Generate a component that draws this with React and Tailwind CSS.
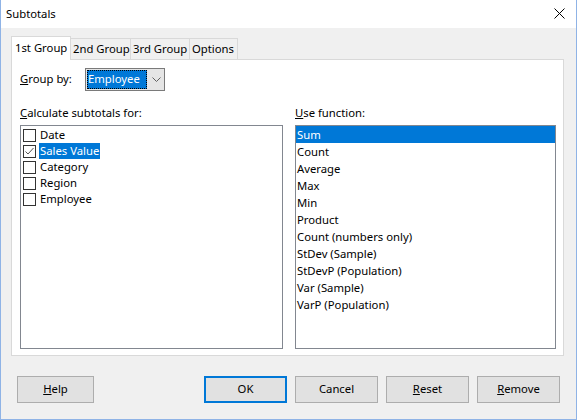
import React from 'react';

const FONT = { fontFamily: '"Noto Sans", "Open Sans", sans-serif' };

const FIELDS = [
  { label: 'Date', checked: false },
  { label: 'Sales Value', checked: true },
  { label: 'Category', checked: false },
  { label: 'Region', checked: false },
  { label: 'Employee', checked: false },
];

const FUNCTIONS = [
  'Sum',
  'Count',
  'Average',
  'Max',
  'Min',
  'Product',
  'Count (numbers only)',
  'StDev (Sample)',
  'StDevP (Population)',
  'Var (Sample)',
  'VarP (Population)',
];

const Button = ({ children, primary, w = 'w-[83px]' }) => (
  <div
    className={`flex h-[27px] ${w} items-center justify-center bg-[#e1e1e1] ${
      primary ? 'border-2 border-[#0078d7]' : 'border border-[#adadad]'
    }`}
  >
    {children}
  </div>
);

export default function App() {
  return (
    <div
      className="flex h-[420px] w-[577px] flex-col whitespace-nowrap border border-t-0 border-[#8fb3e6] bg-[#f0f0f0] text-[11.3px] text-black"
      style={FONT}
    >
      {/* Title bar */}
      <div className="flex h-[28px] items-center justify-between bg-white pl-[5px] pr-[11px]">
        <span>Subtotals</span>
        <svg width="11" height="11" viewBox="0 0 11 11" className="mt-[-2px]">
          <path d="M0.5 0.5 L10.5 10.5 M10.5 0.5 L0.5 10.5" stroke="#000" strokeWidth="1" />
        </svg>
      </div>

      {/* Tabs */}
      <div className="ml-[10px] mt-[8px] flex items-end">
        <div className="relative z-10 -mb-px h-[24px] w-[60px] border border-b-0 border-[#d9d9d9] bg-white pl-[3px] pt-[2px] leading-[18px]">
          1st Group
        </div>
        <div className="h-[21px] w-[60px] border border-b-0 border-l-0 border-[#d9d9d9] pl-[2px] pt-[1px] leading-[18px]">2nd Group</div>
        <div className="h-[21px] w-[59px] border border-b-0 border-l-0 border-[#d9d9d9] pl-[2px] pt-[1px] leading-[18px]">3rd Group</div>
        <div className="h-[21px] w-[48px] border border-b-0 border-l-0 border-[#d9d9d9] pl-[2px] pt-[1px] leading-[18px]">Options</div>
      </div>

      {/* Panel */}
      <div className="ml-[10px] flex h-[297px] w-[553px] flex-col border border-[#d9d9d9] bg-white pl-[8px] pr-[6px] pt-[8px] pb-[6px]">
        <div className="flex items-center">
          <span className="w-[65px]">
            <span className="underline">G</span>roup by:
          </span>
          <div className="flex h-[23px] w-[80px] border border-[#7a7a7a] bg-[#e5e5e5]">
            <div className="m-px flex flex-1 items-center bg-[#0078d7] pl-px text-white outline-1 outline-dotted outline-black -outline-offset-1">
              Employee
            </div>
            <div className="flex w-[16px] items-center justify-center">
              <svg width="9" height="5" viewBox="0 0 9 5">
                <path d="M0.5 0.5 L4.5 4.5 L8.5 0.5" stroke="#606060" fill="none" />
              </svg>
            </div>
          </div>
        </div>

        <div className="mt-[13px] flex flex-1 gap-[12px]">
          <div className="flex w-[263px] flex-col">
            <div className="h-[21px] leading-[17px]">
              <span className="underline">C</span>alculate subtotals for:
            </div>
            <div className="flex-1 border border-[#828790] bg-white pl-px pt-px">
              {FIELDS.map((f) => (
                <div key={f.label} className="flex h-[16px] items-center">
                  <div className="ml-px flex h-[13px] w-[13px] items-center justify-center border border-[#333]">
                    {f.checked && (
                      <svg width="11" height="11" viewBox="0 0 11 11">
                        <path d="M1.5 5.5 L4 8 L9.5 2" stroke="#555" strokeWidth="1" fill="none" />
                      </svg>
                    )}
                  </div>
                  <span
                    className={`ml-[3px] h-[16px] px-px leading-[16px] ${
                      f.checked ? 'bg-[#0078d7] text-white' : ''
                    }`}
                  >
                    {f.label}
                  </span>
                </div>
              ))}
            </div>
          </div>

          <div className="flex w-[261px] flex-col">
            <div className="h-[21px] leading-[17px]">
              <span className="underline">U</span>se function:
            </div>
            <div className="flex-1 border border-[#828790] bg-white">
              {FUNCTIONS.map((fn, i) => (
                <div
                  key={fn}
                  className={`h-[17px] pl-px leading-[18px] ${i === 0 ? 'bg-[#0078d7] text-white' : ''}`}
                >
                  {fn}
                </div>
              ))}
            </div>
          </div>
        </div>
      </div>

      {/* Buttons */}
      <div className="mt-[20px] flex pl-[16px]">
        <Button w="w-[77px]">
          <span className="underline">H</span>elp
        </Button>
        <div className="ml-[110px] flex gap-[8px]">
          <Button primary>OK</Button>
          <Button>Cancel</Button>
          <Button>
            <span className="underline">R</span>eset
          </Button>
          <Button>
            <span className="underline">R</span>emove
          </Button>
        </div>
      </div>
    </div>
  );
}
